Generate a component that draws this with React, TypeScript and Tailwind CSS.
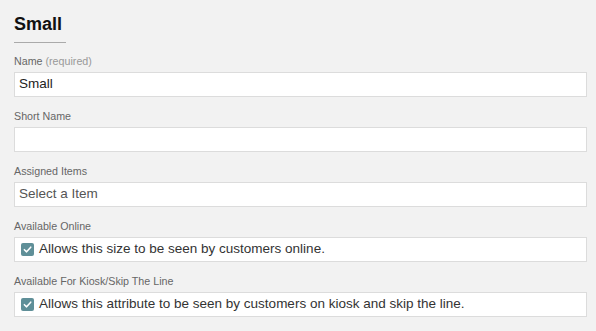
import React from "react";

function Field({ label, extra, children }: { label: string; extra?: string; children: React.ReactNode }) {
    return (
        <div className="mb-[13px]">
            <div className="text-[10.7px] leading-[13px] text-[#666] mb-[4px]">
                {label}
                {extra && <span className="text-[#999]"> {extra}</span>}
            </div>
            {children}
        </div>
    );
}

function CheckRow({ text }: { text: string }) {
    return (
        <div className="flex items-center h-[25px] bg-white border border-[#dcdcdc] pl-[6px]">
            <span className="flex items-center justify-center w-[13px] h-[13px] rounded-[2px] bg-[#5f8f98]">
                <svg width="9" height="9" viewBox="0 0 10 10" fill="none">
                    <path d="M1.5 5.2 L4 7.6 L8.6 2.4" stroke="white" strokeWidth="1.7" strokeLinecap="round" strokeLinejoin="round" />
                </svg>
            </span>
            <span className="ml-[5px] text-[13.5px] text-[#333]">{text}</span>
        </div>
    );
}

export default function App() {
    return (
        <div className="w-[596px] h-[331px] bg-[#f2f2f2] pl-[14px] pr-[9px] pt-[13px] font-['Liberation_Sans',Arial,sans-serif] overflow-hidden">
            <h1 className="text-[18px] leading-[22px] font-bold text-[#111]">Small</h1>
            <div className="w-[52px] h-[1px] bg-[#aaa] mt-[7px] mb-[12px]" />

            <Field label="Name" extra="(required)">
                <div className="h-[25px] flex items-center bg-white border border-[#dcdcdc] px-[4px] text-[13.5px] text-[#222]">Small</div>
            </Field>
            <Field label="Short Name">
                <div className="h-[25px] bg-white border border-[#dcdcdc]" />
            </Field>
            <Field label="Assigned Items">
                <div className="h-[25px] flex items-center bg-white border border-[#dcdcdc] px-[4px] text-[13.5px] text-[#555]">Select a Item</div>
            </Field>
            <Field label="Available Online">
                <CheckRow text="Allows this size to be seen by customers online." />
            </Field>
            <Field label="Available For Kiosk/Skip The Line">
                <CheckRow text="Allows this attribute to be seen by customers on kiosk and skip the line." />
            </Field>
        </div>
    );
}
